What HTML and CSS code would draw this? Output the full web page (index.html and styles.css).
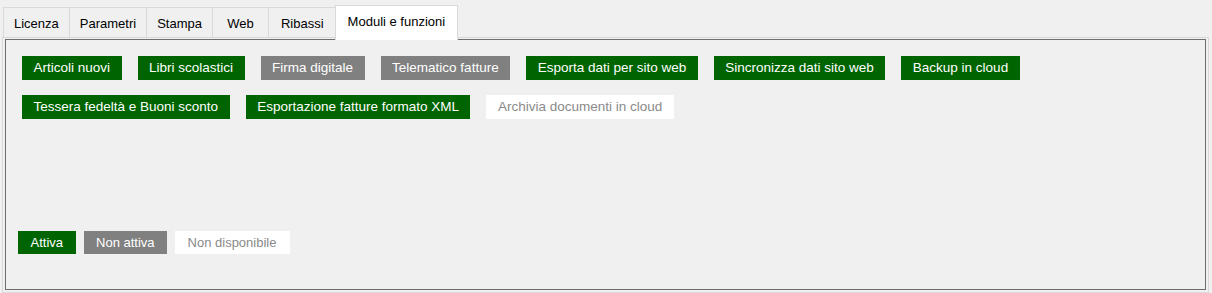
FILE: index.html
```html
<!DOCTYPE html>
<html lang="it">
<head>
<meta charset="utf-8">
<title>Moduli e funzioni</title>
<link rel="stylesheet" href="styles.css">
</head>
<body>
  <div class="tabctl">
    <div class="tabs">
      <div class="tab">Licenza</div>
      <div class="tab">Parametri</div>
      <div class="tab">Stampa</div>
      <div class="tab">Web</div>
      <div class="tab">Ribassi</div>
      <div class="tab tab-active">Moduli e funzioni</div>
    </div>
    <div class="frame">
      <div class="panel">
        <div class="modules">
          <span class="mod on">Articoli nuovi</span>
          <span class="mod on">Libri scolastici</span>
          <span class="mod off">Firma digitale</span>
          <span class="mod off">Telematico fatture</span>
          <span class="mod on">Esporta dati per sito web</span>
          <span class="mod on">Sincronizza dati sito web</span>
          <span class="mod on">Backup in cloud</span>
          <span class="mod on">Tessera fedeltà e Buoni sconto</span>
          <span class="mod on">Esportazione fatture formato XML</span>
          <span class="mod na">Archivia documenti in cloud</span>
        </div>
        <div class="legend">
          <span class="leg on">Attiva</span>
          <span class="leg off">Non attiva</span>
          <span class="leg na">Non disponibile</span>
        </div>
      </div>
    </div>
  </div>
</body>
</html>
```
FILE: styles.css
```css
* { box-sizing: border-box; }
html, body { margin: 0; padding: 0; }
body {
  background: #f0f0f0;
  font-family: "Liberation Sans", Arial, sans-serif;
  font-size: 13px;
  color: #000;
  width: 1212px;
  height: 293px;
  overflow: hidden;
}
.tabctl {
  padding: 0 3px 1px 2px;
}
.tabs {
  display: flex;
  align-items: flex-end;
  height: 37px;
  padding-left: 1px;
}
.tab {
  height: 30px;
  min-width: 57px;
  padding: 1px 10px 0;
  border: 1px solid #d9d9d9;
  border-bottom: none;
  margin-right: -1px;
  background: #f0f0f0;
  display: flex;
  align-items: center;
  justify-content: center;
  white-space: nowrap;
}
.tab:nth-child(5) {
  padding: 1px 12px 0;
}
.tab-active {
  position: relative;
  z-index: 2;
  height: 35px;
  margin-bottom: -3px;
  margin-left: -1px;
  padding: 0 12px 4px;
  background: #fff;
}
.frame {
  border: 1px solid #d9d9d9;
  height: 256px;
  padding: 1px 2px 2px 2px;
}
.panel {
  border: 1px solid #6e6e6e;
  height: 251px;
  display: flex;
  flex-direction: column;
  padding: 16px 16px 35px 12px;
}
.modules {
  display: flex;
  flex-wrap: wrap;
  column-gap: 16px;
  row-gap: 15px;
  padding-left: 4px;
}
.mod {
  height: 24px;
  line-height: 24px;
  padding: 0 11.5px;
  font-size: 13.5px;
  white-space: nowrap;
}
.on { background: #006400; color: #fff; }
.off { background: #808080; color: #fff; }
.na { background: #fff; color: #8a8a8a; }
.legend {
  margin-top: auto;
  display: flex;
  gap: 8px;
}
.leg {
  height: 23px;
  line-height: 23px;
  padding: 0 12.5px;
  white-space: nowrap;
}
.leg.na {
  padding: 0 14px 0 12.5px;
}
```
